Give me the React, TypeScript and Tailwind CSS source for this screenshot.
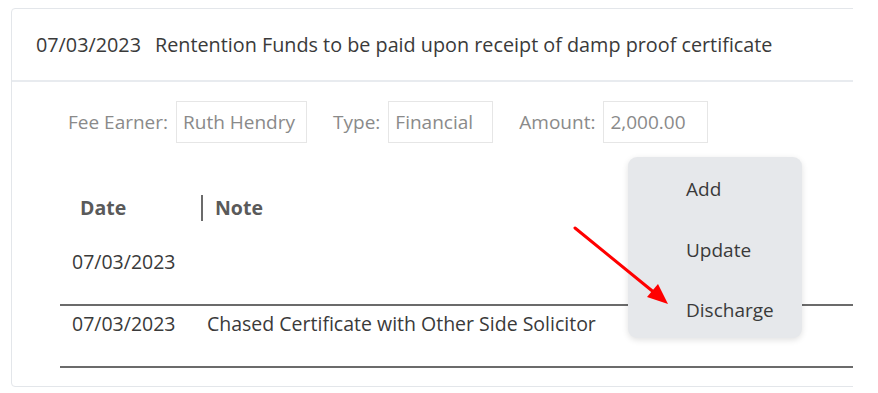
import React from 'react';

const font = { fontFamily: '"Open Sans", "Noto Sans", sans-serif' };

const Field: React.FC<{ label: string; value: string; w: string; gap: string }> = ({ label, value, w, gap }) => (
  <div className="flex items-center">
    <span className={`text-[19px] text-[#8a8a8a] ${gap}`}>{label}</span>
    <div className={`h-[42px] ${w} border border-[#e6e6e6] flex items-center px-[6px] text-[19px] text-[#8a8a8a]`}>{value}</div>
  </div>
);

const App: React.FC = () => {
  return (
    <div className="w-[878px] h-[393px] bg-white relative overflow-hidden" style={font}>
      <div className="absolute left-0 top-0 w-[853px] h-[393px] overflow-hidden">
        <div className="ml-[11px] mt-[8px] w-[900px] h-[379px] border border-[#e3e6ea] rounded-[4px] bg-white">
          {/* title row */}
          <div className="h-[73px] border-b-2 border-[#e8ebef] flex items-center pl-[24px] text-[19.8px] text-[#3a3a3a] whitespace-nowrap">
            <span>07/03/2023</span>
            <span className="ml-[14px]">Rentention Funds to be paid upon receipt of damp proof certificate</span>
          </div>

          {/* fields */}
          <div className="flex items-center pl-[56px] pt-[19px] whitespace-nowrap">
            <Field label="Fee Earner:" value="Ruth Hendry" w="w-[131px]" gap="mr-[8px]" />
            <div className="w-[26px]" />
            <Field label="Type:" value="Financial" w="w-[105px]" gap="mr-[8px]" />
            <div className="w-[26px]" />
            <Field label="Amount:" value="2,000.00" w="w-[105px]" gap="mr-[8px]" />
          </div>

          {/* notes table */}
          <div className="ml-[48px] mt-[52px] w-[800px] text-[19.5px] text-[#3a3a3a] whitespace-nowrap">
            <div className="flex items-center h-[26px]">
              <span className="pl-[20px] w-[141px] font-bold text-[#5a5a5a]">Date</span>
              <span className="w-[2px] h-[26px] bg-[#6b6b6b]" />
              <span className="pl-[12px] font-bold text-[#5a5a5a]">Note</span>
            </div>
            <div className="h-[85px] border-b-2 border-[#6b6b6b] pl-[12px] pt-[26px]">07/03/2023</div>
            <div className="h-[62px] border-b-2 border-[#6b6b6b] pl-[12px] pt-[3px] flex">
              <span className="w-[135px]">07/03/2023</span>
              <span>Chased Certificate with Other Side Solicitor</span>
            </div>
          </div>
        </div>
      </div>

      {/* context menu */}
      <div className="absolute left-[628px] top-[157px] w-[174px] h-[181px] rounded-[9px] bg-[#e6e8eb] shadow-[0_2px_6px_rgba(0,0,0,0.12)] flex flex-col pl-[58px] pt-[18px] text-[19px] text-[#3a3a3a] whitespace-nowrap">
        <div className="h-[61px]">Add</div>
        <div className="h-[60px]">Update</div>
        <div>Discharge</div>
      </div>

      {/* red arrow annotation */}
      <svg className="absolute left-0 top-0" width="878" height="393">
        <line x1="575" y1="228" x2="656" y2="294" stroke="#ff0000" strokeWidth="3" strokeLinecap="round" />
        <polygon points="668,304 647,297 658,284" fill="#ff0000" />
      </svg>
    </div>
  );
};

export default App;
